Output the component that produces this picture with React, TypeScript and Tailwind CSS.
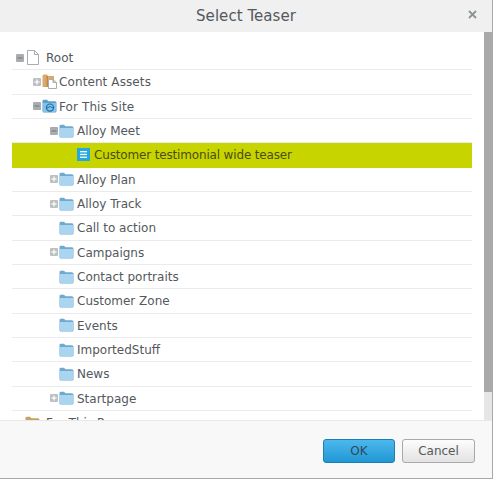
import React from "react";

type Row = {
  label: string;
  depth: number;
  toggle?: "plus" | "minus";
  icon: "page" | "assets" | "site" | "folder" | "teaser" | "orange";
  selected?: boolean;
};

const rows: Row[] = [
  { label: "Root", depth: 0, toggle: "minus", icon: "page" },
  { label: "Content Assets", depth: 1, toggle: "plus", icon: "assets" },
  { label: "For This Site", depth: 1, toggle: "minus", icon: "site" },
  { label: "Alloy Meet", depth: 2, toggle: "minus", icon: "folder" },
  { label: "Customer testimonial wide teaser", depth: 3, icon: "teaser", selected: true },
  { label: "Alloy Plan", depth: 2, toggle: "plus", icon: "folder" },
  { label: "Alloy Track", depth: 2, toggle: "plus", icon: "folder" },
  { label: "Call to action", depth: 2, icon: "folder" },
  { label: "Campaigns", depth: 2, toggle: "plus", icon: "folder" },
  { label: "Contact portraits", depth: 2, icon: "folder" },
  { label: "Customer Zone", depth: 2, icon: "folder" },
  { label: "Events", depth: 2, icon: "folder" },
  { label: "ImportedStuff", depth: 2, icon: "folder" },
  { label: "News", depth: 2, icon: "folder" },
  { label: "Startpage", depth: 2, toggle: "plus", icon: "folder" },
  { label: "For This Page", depth: 0, icon: "orange" },
];

function Toggle({ kind }: { kind?: "plus" | "minus" }) {
  if (!kind) return <span className="w-[8px] h-[8px] shrink-0" />;
  return (
    <svg width="8" height="8" viewBox="0 0 8 8" className="shrink-0">
      <rect width="8" height="8" rx="1" fill={kind === "minus" ? "#a9adb0" : "#bcc0c2"} />
      <rect x="1.5" y="3.4" width="5" height="1.2" fill={kind === "minus" ? "#7b8083" : "#fff"} />
      {kind === "plus" && <rect x="3.4" y="1.5" width="1.2" height="5" fill="#fff" />}
    </svg>
  );
}

function Folder({ back = "#6fa9cf", front = "#a9d5f0", children }: { back?: string; front?: string; children?: React.ReactNode }) {
  return (
    <svg width="15" height="14" viewBox="0 0 15 14" className="shrink-0">
      <path d="M0.5 2 Q0.5 0.8 2 0.8 H5 L6.5 2.2 H13 Q14.5 2.2 14.5 3.7 V12 Q14.5 13.5 13 13.5 H2 Q0.5 13.5 0.5 12 Z" fill={back} />
      <path d="M1 4 H14 V12 Q14 13 13 13 H2 Q1 13 1 12 Z" fill={front} />
      {children}
    </svg>
  );
}

function NodeIcon({ icon }: { icon: Row["icon"] }) {
  if (icon === "page") {
    return (
      <svg width="12" height="15" viewBox="0 0 12 15" className="shrink-0 ml-[1px]">
        <path d="M0.5 0.5 H7.5 L11.5 4.5 V14.5 H0.5 Z M7.5 0.5 V4.5 H11.5" fill="#fff" stroke="#a9adb0" />
      </svg>
    );
  }
  if (icon === "assets") {
    return (
      <svg width="15" height="15" viewBox="0 0 15 15" className="shrink-0">
        <path d="M0.5 2 Q0.5 0.5 2 0.5 H5 L6 2 H12 V13 H0.5 Z" fill="#dbaa6b" />
        <rect x="4.5" y="2" width="1.5" height="11" fill="#b98a4e" />
        <path d="M6.5 5.5 H11 L14.5 8.5 V14.5 H6.5 Z M11 5.5 V8.5 H14.5" fill="#fff" stroke="#a9adb0" />
      </svg>
    );
  }
  if (icon === "site") {
    return (
      <Folder back="#5b9fce" front="#85c0e6">
        <circle cx="8" cy="8.6" r="3.6" fill="none" stroke="#1f6ea6" strokeWidth="1.2" />
        <path d="M5 9 Q8 6 11 9" fill="none" stroke="#1f6ea6" />
      </Folder>
    );
  }
  if (icon === "teaser") {
    return (
      <svg width="13" height="13" viewBox="0 0 13 13" className="shrink-0">
        <rect width="13" height="13" fill="#23a9e0" />
        <rect x="3" y="3" width="7" height="1.3" fill="#fff" />
        <rect x="3" y="5.8" width="7" height="1.3" fill="#fff" />
        <rect x="3" y="8.6" width="7" height="1.3" fill="#fff" />
      </svg>
    );
  }
  if (icon === "orange") return <Folder back="#c9a066" front="#dcb67e" />;
  return <Folder />;
}

function TreeRow({ row }: { row: Row }) {
  const indent = ["pl-[4px]", "pl-[21px]", "pl-[38px]", "pl-[55px]"][row.depth];
  const gap = row.icon === "page" || row.icon === "orange" ? "ml-[6px]" : row.depth === 1 ? "ml-[2px] tracking-[0.1px]" : "ml-[3px]";
  return (
    <div
      className={`h-[24.33px] shrink-0 flex items-center border-b ${indent} ${
        row.selected ? "bg-[#c8d400] border-[#c8d400] text-[#4a4f10]" : "border-[#ebebeb] text-[#54585c]"
      }`}
    >
      <Toggle kind={row.toggle} />
      <span className="w-[15px] flex justify-center shrink-0 ml-[1px]">
        <NodeIcon icon={row.icon} />
      </span>
      <span className={`whitespace-nowrap pt-px ${gap} ${row.selected ? "tracking-[-0.16px]" : ""}`}>
        {row.label}
      </span>
    </div>
  );
}

export default function App() {
  return (
    <div className="w-[496px] h-[480px] bg-white font-['DejaVu_Sans',sans-serif] text-[12px] overflow-hidden flex flex-col">
      <div className="w-[493px] h-[479px] flex flex-col border-r border-b border-[#a8a8a8]">
        <header className="h-[32px] shrink-0 bg-[#f0f0f0] flex items-center justify-center relative text-[#55595c] text-[15px] tracking-[0.05px]">
          Select Teaser
          <svg width="9" height="9" viewBox="0 0 9 9" className="absolute right-[15px] top-[10px]">
            <path d="M1 1 L8 8 M8 1 L1 8" stroke="#8c9396" strokeWidth="1.8" />
          </svg>
        </header>
        <div className="flex-1 min-h-0 flex">
          <div className="flex-1 min-w-0 overflow-hidden pt-[14px] pl-[12px] pr-[12px] flex flex-col">
            {rows.map((row) => (
              <TreeRow key={row.label} row={row} />
            ))}
          </div>
          <div className="w-[8px] shrink-0 bg-[#e6e6e6] flex flex-col">
            <div className="h-[360px] bg-[#a9a9a9]" />
          </div>
        </div>
        <footer className="h-[58px] shrink-0 bg-[#f8f8f8] border-t border-[#e8e8e8] flex items-start justify-end gap-[7px] pt-[18px] pr-[17px]">
          <button className="w-[72px] h-[24px] rounded-[3px] border border-[#1d7fb3] bg-gradient-to-b from-[#4bb8ec] to-[#1f97d4] text-[#2f4a5c]">
            OK
          </button>
          <button className="w-[73px] h-[24px] rounded-[3px] border border-[#a9a9a9] bg-gradient-to-b from-[#fdfdfd] to-[#e2e2e2] text-[#55595c]">
            Cancel
          </button>
        </footer>
      </div>
    </div>
  );
}
